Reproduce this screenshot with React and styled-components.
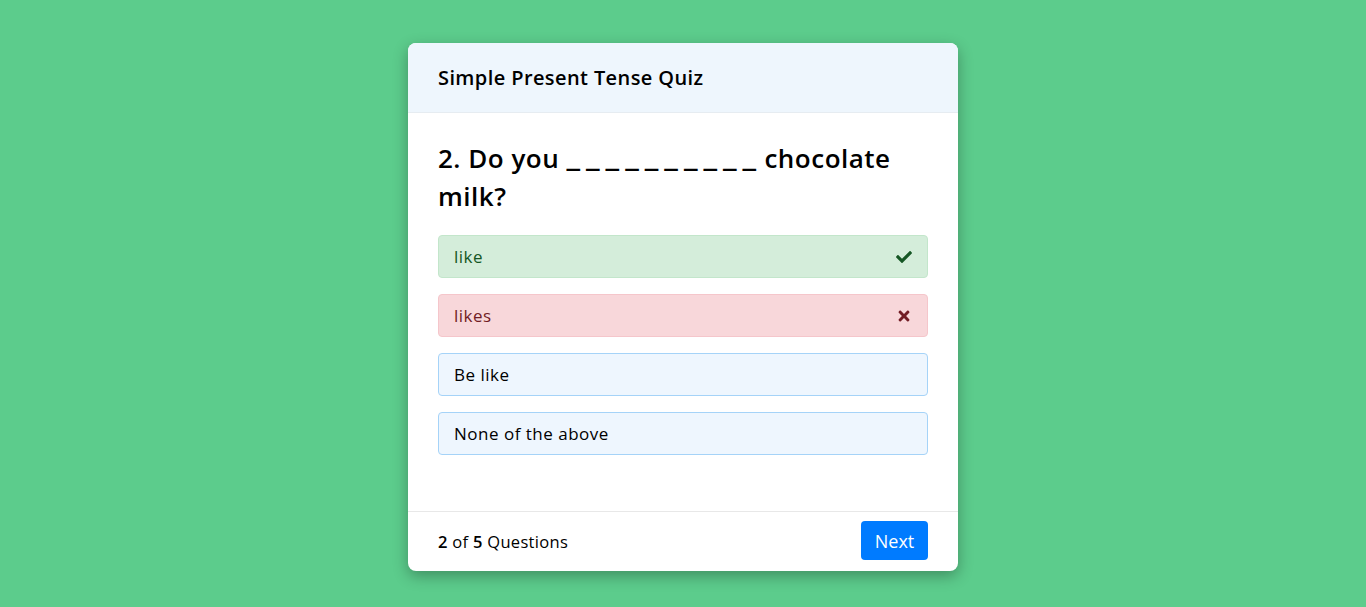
import React from "react";
import styled, { createGlobalStyle } from "styled-components";
import { FaCheck, FaTimes } from "react-icons/fa";

const GlobalStyle = createGlobalStyle`
  * { box-sizing: border-box; }
  body {
    margin: 0;
    background: #5ccc8c;
    font-family: "Open Sans", "Noto Sans", Arial, sans-serif;
    color: #000;
  }
`;

const options = [
  { text: "like", status: "correct" },
  { text: "likes", status: "wrong" },
  { text: "Be like" },
  { text: "None of the above" },
];

export default function App() {
  return (
    <>
      <GlobalStyle />
      <Page>
        <Card>
          <Header>Simple Present Tense Quiz</Header>
          <Body>
            <Question>
              2. Do you <Blank>__________</Blank> chocolate milk?
            </Question>
            <OptionList>
              {options.map((opt) => (
                <Option key={opt.text} $status={opt.status}>
                  <span>{opt.text}</span>
                  {opt.status === "correct" && <FaCheck size={16} />}
                  {opt.status === "wrong" && <FaTimes size={16} />}
                </Option>
              ))}
            </OptionList>
          </Body>
          <Footer>
            <Count>
              <b>2</b> of <b>5</b> Questions
            </Count>
            <NextButton>Next</NextButton>
          </Footer>
        </Card>
      </Page>
    </>
  );
}

const Page = styled.div`
  min-height: 607px;
  display: flex;
  justify-content: center;
  padding-top: 43px;
`;

const Card = styled.div`
  width: 550px;
  height: 528px;
  background: #fff;
  border-radius: 8px;
  box-shadow: 0 5px 15px rgba(0, 0, 0, 0.3);
  display: flex;
  flex-direction: column;
  overflow: hidden;
`;

const Header = styled.div`
  height: 70px;
  background: #eef6fd;
  border-bottom: 1px solid #e6ecf1;
  padding: 0 30px;
  display: flex;
  align-items: center;
  font-size: 20px;
  letter-spacing: 0.4px;
  font-weight: 600;
`;

const Body = styled.div`
  flex: 1;
  padding: 26px 30px 0;
`;

const Question = styled.h3`
  margin: 0 0 20px;
  font-size: 26px;
  letter-spacing: 0.5px;
  font-weight: 600;
  line-height: 38px;
`;

const Blank = styled.span`
  font-size: 33px;
  font-weight: 700;
  line-height: 0;
  letter-spacing: 6px;
  margin-right: -5px;
  vertical-align: 2px;
`;

const OptionList = styled.div`
  display: flex;
  flex-direction: column;
  gap: 16px;
`;

const tones = {
  correct: { bg: "#d4edda", border: "#c3e6cb", color: "#155724" },
  wrong: { bg: "#f8d7da", border: "#f5c6cb", color: "#721c24" },
  normal: { bg: "#eef6fe", border: "#a5d3f8", color: "#000" },
};

const Option = styled.div`
  height: 43px;
  padding: 0 15px;
  display: flex;
  align-items: center;
  justify-content: space-between;
  font-size: 17px;
  letter-spacing: 0.5px;
  border-radius: 4px;
  background: ${(p) => tones[p.$status || "normal"].bg};
  border: 1px solid ${(p) => tones[p.$status || "normal"].border};
  color: ${(p) => tones[p.$status || "normal"].color};
`;

const Footer = styled.div`
  height: 60px;
  border-top: 1px solid #e8e8e8;
  padding: 0 30px;
  display: flex;
  align-items: center;
  justify-content: space-between;
`;

const Count = styled.div`
  font-size: 16.5px;
  letter-spacing: 0.3px;
  b { font-weight: 600; }
`;

const NextButton = styled.button`
  width: 67px;
  height: 39px;
  margin-top: -2px;
  border: none;
  border-radius: 4px;
  background: #007bff;
  color: #fff;
  font-family: inherit;
  font-size: 18px;
`;
